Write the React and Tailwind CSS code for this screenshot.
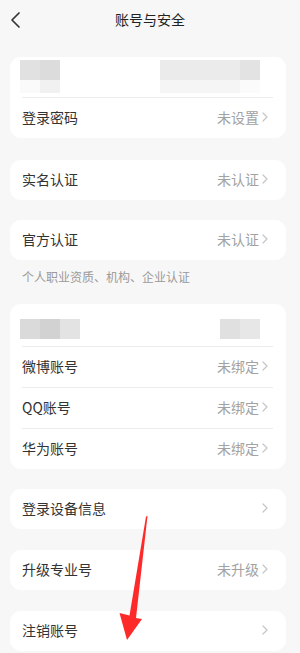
import React from "react";

const FONT = { fontFamily: '"Noto Sans CJK SC", "Noto Sans", sans-serif' };

function Chevron() {
  return (
    <svg width="6" height="10" viewBox="0 0 6 10" className="ml-[3px] shrink-0">
      <path d="M1 1 L5 5 L1 9" fill="none" stroke="#c6c6c6" strokeWidth="1.2" strokeLinecap="round" strokeLinejoin="round" />
    </svg>
  );
}

function Row({ label, value }) {
  return (
    <div className="h-[40px] flex items-center justify-between pl-[12px] pr-[18px]">
      <span className="text-[14px] text-[#333333] leading-none -translate-y-px">{label}</span>
      <div className="flex items-center -translate-y-px">
        {value && <span className="text-[14px] text-[#a2a2a2] leading-none">{value}</span>}
        <Chevron />
      </div>
    </div>
  );
}

function Divider() {
  return <div className="ml-[12px] mr-[13px] h-px bg-[#ececec]" />;
}

function Card({ className = "", children }) {
  return <div className={"ml-[10px] mr-[14px] bg-white rounded-[11px] overflow-hidden " + className}>{children}</div>;
}

export default function App() {
  return (
    <div className="relative w-[300px] min-h-[653px] bg-[#f7f7f7] overflow-hidden" style={FONT}>
      <div className="h-[38px] flex items-center justify-center relative">
        <svg width="20" height="20" viewBox="0 0 20 20" className="absolute left-[6px] top-[10px]">
          <path d="M13 3 L6 10 L13 17" fill="none" stroke="#333" strokeWidth="1.7" strokeLinecap="round" strokeLinejoin="round" />
        </svg>
        <span className="text-[14px] text-[#222] leading-none">账号与安全</span>
      </div>

      <Card className="mt-[19px]">
        <div className="h-[40px] flex pt-[3px]">
          <div className="ml-[10px] flex flex-col">
            <div className="flex">
              <div className="w-[20px] h-[20px] bg-[#e1e1e1]" />
              <div className="w-[20px] h-[20px] bg-[#dcdcdc]" />
            </div>
            <div className="flex">
              <div className="w-[20px] h-[13px] bg-[#fafafa]" />
              <div className="w-[20px] h-[13px] bg-[#f1f1f1]" />
            </div>
          </div>
          <div className="ml-[100px] flex flex-col">
            <div className="flex">
              <div className="w-[80px] h-[20px] bg-[#ebebeb]" />
              <div className="w-[20px] h-[20px] bg-[#e3e3e3]" />
            </div>
            <div className="flex">
              <div className="w-[80px] h-[13px] bg-[#f5f5f5]" />
              <div className="w-[20px] h-[13px] bg-[#fbfbfb]" />
            </div>
          </div>
        </div>
        <Divider />
        <Row label="登录密码" value="未设置" />
      </Card>

      <Card className="mt-[22px]">
        <Row label="实名认证" value="未认证" />
      </Card>

      <Card className="mt-[20px]">
        <Row label="官方认证" value="未认证" />
      </Card>

      <div className="mt-[8px] h-[17px] pl-[22px] text-[12px] leading-[17px] text-[#9a9a9a]">个人职业资质、机构、企业认证</div>

      <Card className="mt-[19px]">
        <div className="h-[42px] flex pt-[15px]">
          <div className="ml-[10px] flex h-[20px]">
            <div className="w-[20px] h-[20px] bg-[#dadada]" />
            <div className="w-[20px] h-[20px] bg-[#d2d2d2]" />
            <div className="w-[20px] h-[20px] bg-[#e3e3e3]" />
          </div>
          <div className="ml-[140px] flex h-[20px]">
            <div className="w-[20px] h-[20px] bg-[#e0e0e0]" />
            <div className="w-[20px] h-[20px] bg-[#e7e7e7]" />
          </div>
        </div>
        <Divider />
        <Row label="微博账号" value="未绑定" />
        <Divider />
        <Row label="QQ账号" value="未绑定" />
        <Divider />
        <Row label="华为账号" value="未绑定" />
      </Card>

      <Card className="mt-[20px]">
        <Row label="登录设备信息" />
      </Card>

      <Card className="mt-[21px]">
        <Row label="升级专业号" value="未升级" />
      </Card>

      <Card className="mt-[21px]">
        <Row label="注销账号" />
      </Card>

      <svg className="absolute left-0 top-0 pointer-events-none" width="300" height="653" viewBox="0 0 300 653">
        <polygon points="147.5,516 136,618 142,619 127,640 119.5,613 129.5,615.5 146,516.5" fill="#fe2a2a" />
      </svg>
    </div>
  );
}
